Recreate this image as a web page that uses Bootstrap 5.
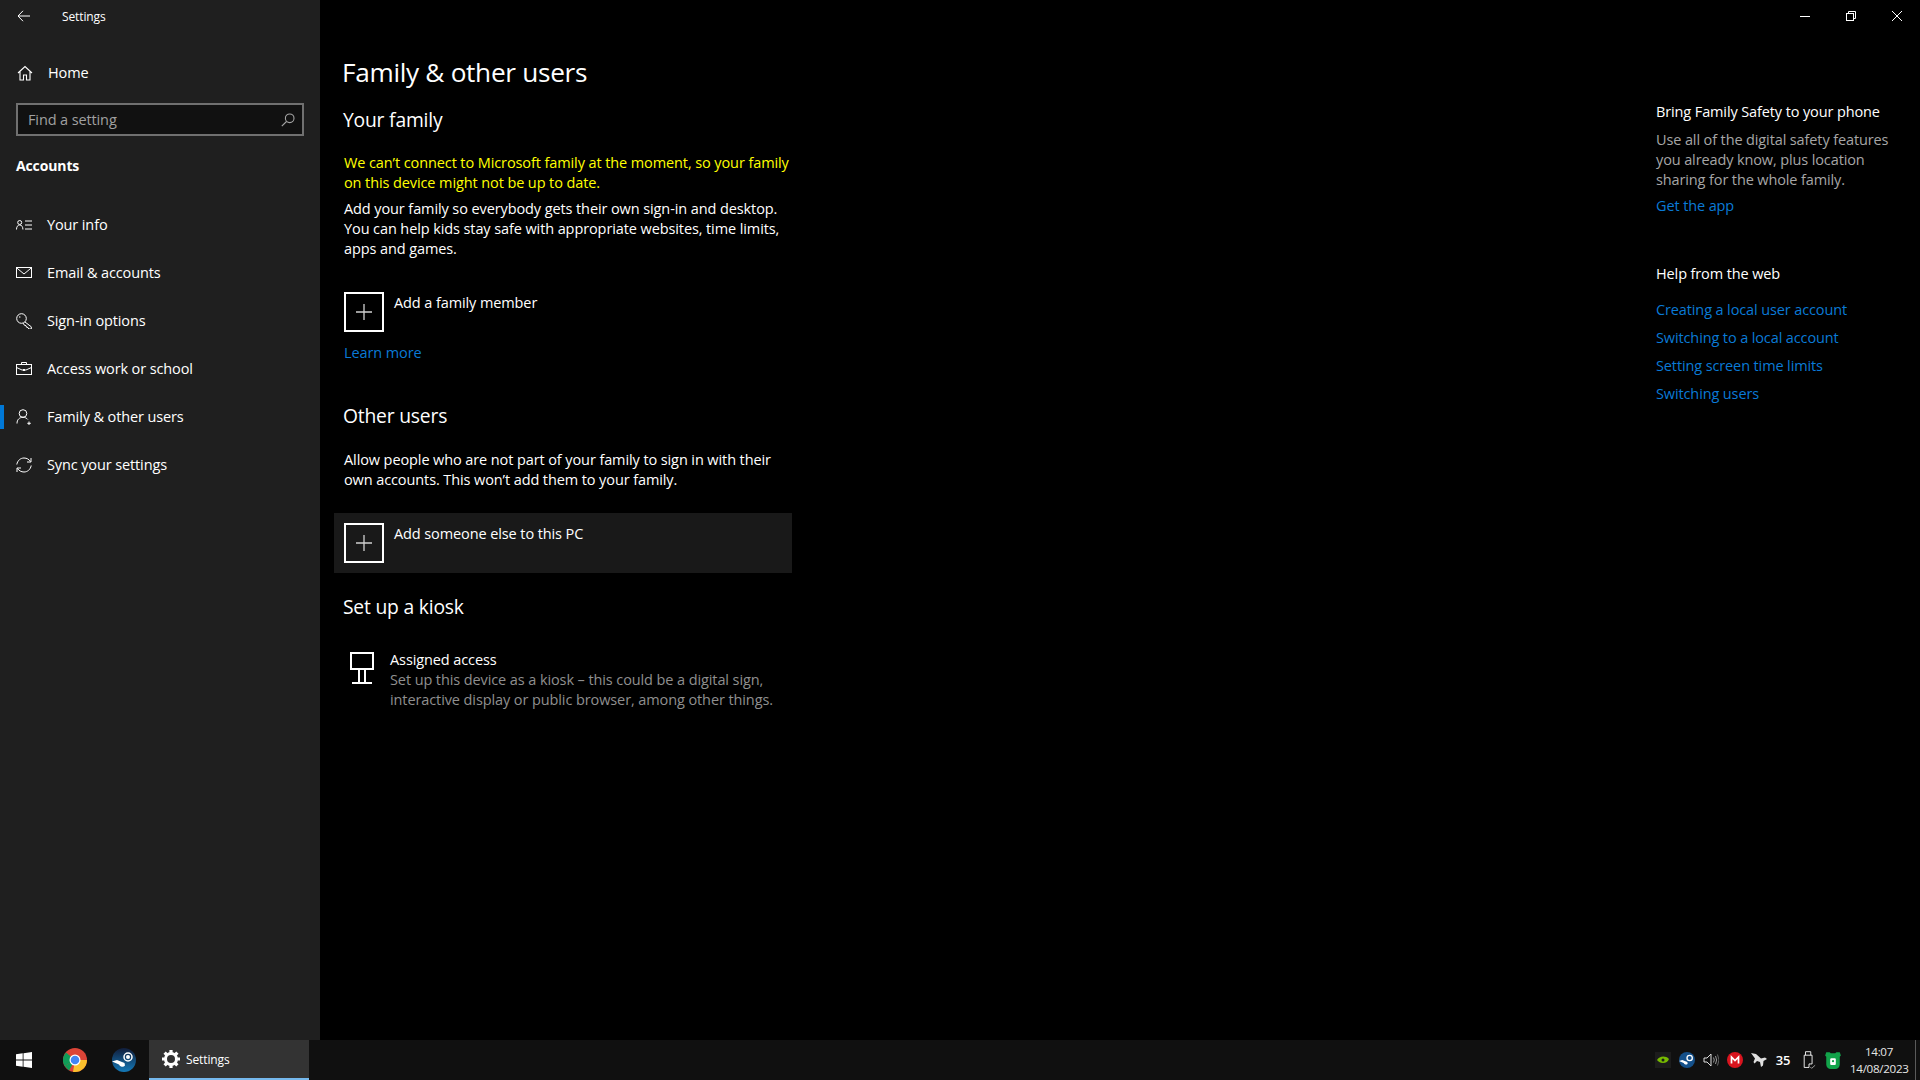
<!DOCTYPE html>
<html lang="en">
<head>
<meta charset="utf-8">
<title>Settings</title>
<link href="https://cdn.jsdelivr.net/npm/bootstrap@5.3.0/dist/css/bootstrap.min.css" rel="stylesheet">
<style>
html,body{height:100%}
body{background:#000;color:#fff;font-family:"Open Sans","Noto Sans",sans-serif;font-size:14.5px;line-height:20px;letter-spacing:-.12px;overflow:hidden}
.shell{height:1080px}
.workarea{height:1040px}
.sidepane{width:320px;background:#1f1f1f}
.capbar{height:32px;padding-left:17px}
.capbar span{font-size:12px;margin-left:32px;margin-top:1px}
.homeitem{height:32px;margin-top:25px;padding-left:17px}
.homeitem span{margin-left:15px}
.searchbox{margin:14px 16px 0;height:33px;border:2px solid #707070;background:#111;padding:0 7px 0 10px;color:#a0a0a0}
.sidehead{margin:20px 16px 0;font-weight:700;font-size:14px;height:20px;line-height:20px}
.navlist{margin-top:25px}
.navrow{height:48px;padding-left:16px}
.navrow svg{width:16px;height:16px;margin-right:15px;flex:none}
.navrow.current::before{content:"";position:absolute;left:0;top:12px;width:4px;height:24px;background:#0078d7}
.mainpane{width:474px;padding:0 0 0 22px;flex:none;letter-spacing:-.1px}
.pagetitle{font-size:26.2px;line-height:36px;margin:54px 0 0;letter-spacing:-.3px;font-weight:400}
.sectionhead{font-size:19.3px;line-height:26px;margin:0;font-weight:400;letter-spacing:-.2px}
.leadhead{margin:17px 0 0 1px}
.warnline{color:#ff0;margin:20px 0 0 2px}
.bodycopy{margin:6px 0 0 2px}
.plusrow{display:flex;padding:0 0 0 2px}
.familyadd{margin-top:33px}
.plusbox{width:40px;height:40px;border:2px solid #fff;flex:none;display:flex;align-items:center;justify-content:center;margin-right:10px}
.plustext{line-height:20px;margin-top:1px}
.learnrow{margin-top:11px}
.weblink{color:#0a7ad6;text-decoration:none}
.otherhead{margin:40px 0 0 1px}
.otherpara{margin-top:21px}
.activerow{background:#191919;margin:23px 0 0 -8px;padding:10px 0 10px 10px;width:458px;height:60px}
.kioskhead{margin:21px 0 0 1px}
.kioskrow{margin:30px 0 0 8px}
.kioskrow svg{width:24px;height:33px;margin-right:16px;flex:none;margin-top:2px}
.mutedtext{color:#8f8f8f}
.asidepane{width:264px;flex:none;margin-left:auto}
.winctl{height:32px}
.winctl span{width:46px;height:32px;display:flex;align-items:center;justify-content:center}
.asidebody{padding-top:70px}
.asidebody p{margin:0}
.asidebody .asidecopy{color:#a6a6a6;margin-top:8px}
.asidebody .applink{margin-top:6px}
.asidebody .helphead{margin-top:48px}
.linkstack{margin-top:12px}
.linkstack a{display:block;height:28px;line-height:28px}
.taskstrip{height:40px;background:#101010}
.taskslot{height:40px}
.startslot{width:50px;padding-left:16px}
.appslot{width:49px;justify-content:center}
.activeapp{width:160px;background:#333;border-bottom:2px solid #76b9ed;padding-left:13px;margin-left:1px}
.activeapp span{font-size:12px;margin-left:6px;margin-top:2px}
.trayicons{gap:8px;margin-right:8px}
.trayicons svg{width:16px;height:16px;flex:none;display:block}
.trayicons span{font-size:13px;width:16px;text-align:center;font-weight:600}
.trayicons .usbmark{width:14px;height:20px;margin-left:3px}
.trayicons .bearmark{width:18px;height:18px}
.clockbox{width:58px;font-size:11.6px;line-height:17px;text-align:center;color:#e6e6e6;letter-spacing:-.3px}
.deskedge{width:1px;height:40px;background:#5a5a5a;margin:0 4px 0 7px}
</style>
</head>
<body>
<div class="shell d-flex flex-column">
  <div class="workarea d-flex">
    <nav class="sidepane d-flex flex-column flex-shrink-0">
      <div class="capbar d-flex align-items-center">
        <svg width="13" height="12" viewBox="0 0 13 12" fill="none" stroke="#fff" stroke-width="1"><path d="M6 .8 1 6l5 5.200M1 6h12"/></svg>
        <span>Settings</span>
      </div>
      <div class="homeitem d-flex align-items-center">
        <svg width="16" height="16" viewBox="0 0 16 16" fill="none" stroke="#fff" stroke-width="1.100"><path d="M1 8 8 1.500 15 8M3 6.500V15h3.500v-5h3v5H13V6.500"/></svg>
        <span>Home</span>
      </div>
      <div class="searchbox d-flex align-items-center justify-content-between">
        <span>Find a setting</span>
        <svg width="14" height="14" viewBox="0 0 14 14" fill="none" stroke="#a6a6a6" stroke-width="1.100"><circle cx="8.700" cy="5.300" r="4.300"/><path d="M5.500 8.500 .8 13.200"/></svg>
      </div>
      <div class="sidehead">Accounts</div>
      <div class="navlist">
        <div class="navrow d-flex align-items-center position-relative">
          <svg viewBox="0 0 16 16" fill="none" stroke="#fff"><circle cx="3.700" cy="5.500" r="2"/><path d="M.5 12.500c0-2.500 1-4.500 3.200-4.500s3.200 2 3.200 4.500M9 4h7M9 8h7M9 12h7"/></svg>
          <span>Your info</span>
        </div>
        <div class="navrow d-flex align-items-center position-relative">
          <svg viewBox="0 0 16 16" fill="none" stroke="#fff"><rect x=".5" y="2.500" width="15" height="10"/><path d="M.8 3 8 9l7.200-6"/></svg>
          <span>Email &amp; accounts</span>
        </div>
        <div class="navrow d-flex align-items-center position-relative">
          <svg viewBox="0 0 16 16" fill="none" stroke="#fff"><circle cx="5.500" cy="5.500" r="4.800"/><circle cx="3.800" cy="4" r=".7" fill="#fff" stroke="none"/><path d="m9 9 6.300 4.800V16h-2.500l-.8-1.500-1.500-.3-.5-1.500-1.700-.5-1-2"/></svg>
          <span>Sign-in options</span>
        </div>
        <div class="navrow d-flex align-items-center position-relative">
          <svg viewBox="0 0 16 16" fill="none" stroke="#fff"><rect x=".5" y="3.500" width="15" height="10"/><path d="M5.500 3.500v-2h5v2M.5 6.500 6 9h4l5.500-2.500"/><rect x="7" y="8" width="2" height="2" fill="#fff" stroke="none"/></svg>
          <span>Access work or school</span>
        </div>
        <div class="navrow current d-flex align-items-center position-relative">
          <svg viewBox="0 0 16 16" fill="none" stroke="#fff"><circle cx="7" cy="4.500" r="3.800"/><path d="M1 14.500c0-4 2.500-6.200 6-6.200 2 0 3.700.8 4.800 2.200M13 12.500v3.500M11.300 14.300h3.500"/></svg>
          <span>Family &amp; other users</span>
        </div>
        <div class="navrow d-flex align-items-center position-relative">
          <svg viewBox="0 0 16 16" fill="none" stroke="#fff"><path d="M.8 7.500C1.500 3.500 4.500 1 8 1c2.800 0 5 1.300 6.500 3.500M15.200 8.500C14.500 12.500 11.500 15 8 15c-2.800 0-5-1.300-6.500-3.500M15 1v4h-4M1 15v-4h4"/></svg>
          <span>Sync your settings</span>
        </div>
      </div>
    </nav>
    <main class="mainpane">
      <h1 class="pagetitle">Family &amp; other users</h1>
      <h2 class="sectionhead leadhead">Your family</h2>
      <p class="warnline">We can’t connect to Microsoft family at the moment, so your family<br>on this device might not be up to date.</p>
      <p class="bodycopy">Add your family so everybody gets their own sign-in and desktop.<br>You can help kids stay safe with appropriate websites, time limits,<br>apps and games.</p>
      <div class="plusrow familyadd">
        <div class="plusbox"><svg width="18" height="18" viewBox="0 0 18 18" stroke="#d0d0d0" stroke-width="1.300"><path d="M9 1v16M1 9h16"/></svg></div>
        <div class="plustext">Add a family member</div>
      </div>
      <div class="plusrow learnrow"><a class="weblink" href="#">Learn more</a></div>
      <h2 class="sectionhead otherhead">Other users</h2>
      <p class="bodycopy otherpara">Allow people who are not part of your family to sign in with their<br>own accounts. This won’t add them to your family.</p>
      <div class="activerow d-flex">
        <div class="plusbox"><svg width="18" height="18" viewBox="0 0 18 18" stroke="#d0d0d0" stroke-width="1.300"><path d="M9 1v16M1 9h16"/></svg></div>
        <div class="plustext">Add someone else to this PC</div>
      </div>
      <h2 class="sectionhead kioskhead">Set up a kiosk</h2>
      <div class="kioskrow d-flex">
        <svg viewBox="0 0 24 33" fill="none" stroke="#fff" stroke-width="2"><path d="M1 1h22v16H1zM9 17v14M15 17v14M2 31h20"/></svg>
        <div>
          <div>Assigned access</div>
          <div class="mutedtext">Set up this device as a kiosk – this could be a digital sign,<br>interactive display or public browser, among other things.</div>
        </div>
      </div>
    </main>
    <aside class="asidepane">
      <div class="winctl d-flex justify-content-end">
        <span><svg width="10" height="10" viewBox="0 0 10 10" stroke="#fff"><path d="M0 5.500h10"/></svg></span>
        <span><svg width="10" height="10" viewBox="0 0 10 10" fill="none" stroke="#fff"><rect x=".5" y="2.500" width="7" height="7"/><path d="M2.500 2.500v-2h7v7h-2"/></svg></span>
        <span><svg width="10" height="10" viewBox="0 0 10 10" stroke="#fff"><path d="m0 0 10 10M10 0 0 10"/></svg></span>
      </div>
      <div class="asidebody">
        <p>Bring Family Safety to your phone</p>
        <p class="asidecopy">Use all of the digital safety features<br>you already know, plus location<br>sharing for the whole family.</p>
        <p class="applink"><a class="weblink" href="#">Get the app</a></p>
        <p class="helphead">Help from the web</p>
        <div class="linkstack">
          <a class="weblink" href="#">Creating a local user account</a>
          <a class="weblink" href="#">Switching to a local account</a>
          <a class="weblink" href="#">Setting screen time limits</a>
          <a class="weblink" href="#">Switching users</a>
        </div>
      </div>
    </aside>
  </div>
  <footer class="taskstrip d-flex align-items-center">
    <div class="taskslot startslot d-flex align-items-center">
      <svg width="16" height="16" viewBox="0 0 16 16" fill="#fff"><path d="M0 2.300 6.700 1.300V7.600H0zM7.500 1.200 16 0v7.600H7.500zM0 8.400h6.700v6.300L0 13.700zM7.500 8.400H16V16l-8.500-1.200z"/></svg>
    </div>
    <div class="taskslot appslot d-flex align-items-center">
      <svg width="24" height="24" viewBox="0 0 24 24"><circle cx="12" cy="12" r="12" fill="#db4437"/><path d="M12 12 1.600 18A12 12 0 0 1 3 4.500z" fill="#0f9d58"/><path d="M12 12h12a12 12 0 0 1-12 12H10z" fill="#fbc02d"/><path d="M12 12 6 22.400 1.600 18z" fill="#0f9d58"/><circle cx="12" cy="12" r="5.500" fill="#fff"/><circle cx="12" cy="12" r="4.300" fill="#4285f4"/></svg>
    </div>
    <div class="taskslot appslot d-flex align-items-center">
      <svg width="24" height="24" viewBox="0 0 24 24"><defs><linearGradient id="stm" x1="0" y1="0" x2="0" y2="1"><stop offset="0" stop-color="#111d3a"/><stop offset="1" stop-color="#1479b8"/></linearGradient></defs><circle cx="12" cy="12" r="12" fill="url(#stm)"/><path d="M0 13.500 7 16.500a3.500 3.500 0 0 0 6 1l-.5-2.500L5 12z" fill="#fff"/><circle cx="16" cy="9" r="4" fill="none" stroke="#fff" stroke-width="1.500"/><circle cx="16" cy="9" r="2" fill="#fff"/></svg>
    </div>
    <div class="taskslot activeapp d-flex align-items-center">
      <svg width="18" height="18" viewBox="0 0 18 18"><circle cx="9" cy="9" r="5.500" fill="none" stroke="#fff" stroke-width="3"/><path d="M9 0v4M9 14v4M0 9h4M14 9h4M2.600 2.600l2.900 2.900M12.500 12.500l2.900 2.900M15.400 2.600l-2.900 2.900M5.500 12.500l-2.900 2.900" stroke="#fff" stroke-width="3.200"/></svg>
      <span>Settings</span>
    </div>
    <div class="d-flex align-items-center ms-auto">
      <div class="trayicons d-flex align-items-center">
        <svg viewBox="0 0 16 16"><rect width="16" height="16" fill="#1c1c1c"/><path d="M2 8c2-3.500 8-5 12-1-1 2.500-3 4-6 4-3 0-5-1.500-6-3z" fill="#76b900"/><circle cx="8" cy="8" r="1.500" fill="#1c1c1c"/></svg>
        <svg viewBox="0 0 24 24"><circle cx="12" cy="12" r="12" fill="#14508a"/><path d="M0 13.500 7 16.500a3.500 3.500 0 0 0 6 1l-.5-2.500L5 12z" fill="#fff"/><circle cx="16" cy="9" r="4" fill="none" stroke="#fff" stroke-width="2"/></svg>
        <svg viewBox="0 0 16 16" fill="none" stroke="#ddd"><path d="M1 6h3l4-4v12l-4-4H1z"/><path d="M10.500 5.500q1.500 2.500 0 5M12.500 4q2.200 4 0 8" stroke="#999"/><path d="M14.500 2.500q3 5.500 0 11" stroke="#666"/></svg>
        <svg viewBox="0 0 16 16"><circle cx="8" cy="8" r="8" fill="#d9141e"/><path d="M4.500 11.500V5l3.500 3.500L11.500 5v6.500" fill="none" stroke="#fff" stroke-width="1.700"/></svg>
        <svg viewBox="0 0 16 16" fill="#e0e0e0"><path d="M0 1 5 2 10 6.500 14 5.500 16 7 12.500 9 12 13.500 10 15 9 10 6 9 3.500 11.500 2.500 10 4 6.500z"/></svg>
        <span>35</span>
        <svg class="usbmark" viewBox="0 0 16 20" fill="none" stroke="#fff"><path d="M4 4.500V.5h6v4M2.500 4.500h9v10H8v4H2.500z"/><path d="m9.500 18 1.500 1.500 4-3.500" stroke="#aaa"/></svg>
        <svg class="bearmark" viewBox="0 0 16 16"><path d="M2 1h3l1 1h4l1-1h3l1 3-1 1v7a4 4 0 0 1-4 4H6a4 4 0 0 1-4-4V5L1 4z" fill="#12a34a"/><rect x="5.500" y="6.500" width="5" height="6" rx="1" fill="#fff"/><circle cx="8" cy="9" r="1" fill="#12a34a"/></svg>
      </div>
      <div class="clockbox"><div>14:07</div><div>14/08/2023</div></div>
      <div class="deskedge"></div>
    </div>
  </footer>
</div>
<script src="https://cdn.jsdelivr.net/npm/bootstrap@5.3.0/dist/js/bootstrap.bundle.min.js"></script>
</body>
</html>
